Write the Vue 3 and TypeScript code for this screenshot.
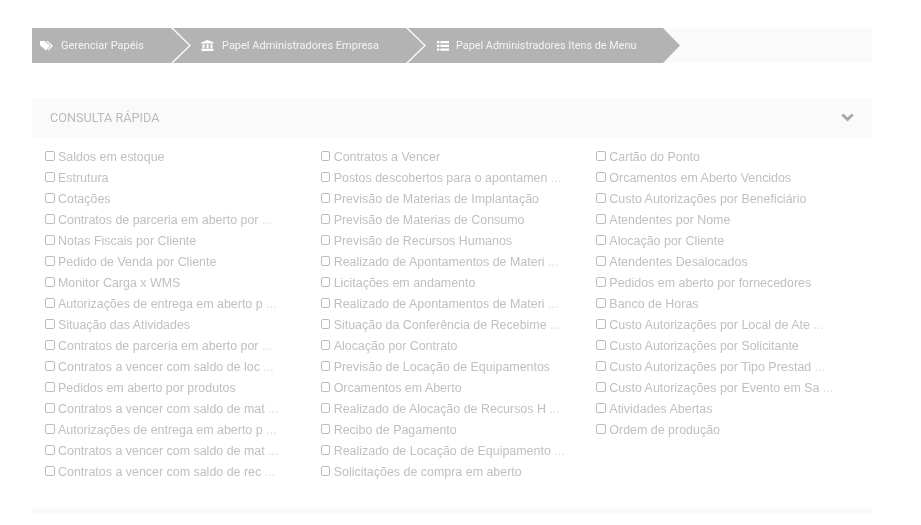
<script setup lang="ts">
const crumbs: { label: string; icon: string }[] = [
  { label: 'Gerenciar Papéis', icon: 'tags' },
  { label: 'Papel Administradores Empresa', icon: 'bank' },
  { label: 'Papel Administradores Itens de Menu', icon: 'list' },
]
const columns: string[][] = [
  [
    'Saldos em estoque', 'Estrutura', 'Cotações', 'Contratos de parceria em aberto por ...',
    'Notas Fiscais por Cliente', 'Pedido de Venda por Cliente', 'Monitor Carga x WMS',
    'Autorizações de entrega em aberto p ...', 'Situação das Atividades',
    'Contratos de parceria em aberto por ...', 'Contratos a vencer com saldo de loc ...',
    'Pedidos em aberto por produtos', 'Contratos a vencer com saldo de mat ...',
    'Autorizações de entrega em aberto p ...', 'Contratos a vencer com saldo de mat ...',
    'Contratos a vencer com saldo de rec ...',
  ],
  [
    'Contratos a Vencer', 'Postos descobertos para o apontamen ...', 'Previsão de Materias de Implantação',
    'Previsão de Materias de Consumo', 'Previsão de Recursos Humanos',
    'Realizado de Apontamentos de Materi ...', 'Licitações em andamento',
    'Realizado de Apontamentos de Materi ...', 'Situação da Conferência de Recebime ...',
    'Alocação por Contrato', 'Previsão de Locação de Equipamentos', 'Orcamentos em Aberto',
    'Realizado de Alocação de Recursos H ...', 'Recibo de Pagamento',
    'Realizado de Locação de Equipamento ...', 'Solicitações de compra em aberto',
  ],
  [
    'Cartão do Ponto', 'Orcamentos em Aberto Vencidos', 'Custo Autorizações por Beneficiário',
    'Atendentes por Nome', 'Alocação por Cliente', 'Atendentes Desalocados',
    'Pedidos em aberto por fornecedores', 'Banco de Horas', 'Custo Autorizações por Local de Ate ...',
    'Custo Autorizações por Solicitante', 'Custo Autorizações por Tipo Prestad ...',
    'Custo Autorizações por Evento em Sa ...', 'Atividades Abertas', 'Ordem de produção',
  ],
]
const body = (t: string): string => t.replace(/ \.\.\.$/, '')
const more = (t: string): boolean => t.endsWith(' ...')
</script>

<template>
  <div class="page">
    <nav class="crumbs">
      <div v-for="(c, i) in crumbs" :key="c.label" class="crumb" :class="'crumb-' + i">
        <svg v-if="c.icon === 'tags'" class="ic" viewBox="0 0 14 10" width="14" height="10">
          <path d="M0 0h4.5L10 4.8 6 9.6 0 4.2z" fill="#fff" />
          <path d="M6 0h1.6L13 4.8 8.6 9.6 7.6 8.9 11 4.8z" fill="#fff" />
        </svg>
        <svg v-else-if="c.icon === 'bank'" class="ic" viewBox="0 0 13 11" width="13" height="11">
          <path d="M6.5 0L13 2.6V3.6H0V2.6z" fill="#fff" />
          <path d="M1.5 4.2h2v4h-2zM5.5 4.2h2v4h-2zM9.5 4.2h2v4h-2z" fill="#fff" />
          <path d="M0.5 8.8h12V11h-12z" fill="#fff" />
        </svg>
        <svg v-else class="ic" viewBox="0 0 12 10" width="12" height="10">
          <path d="M0 0h2.4v2.2H0zM0 3.8h2.4V6H0zM0 7.6h2.4v2.2H0zM3.4 0H12v2.2H3.4zM3.4 3.8H12V6H3.4zM3.4 7.6H12v2.2H3.4z" fill="#fff" />
        </svg>
        <span>{{ c.label }}</span>
      </div>
    </nav>

    <section class="panel-head">
      <span class="title">CONSULTA RÁPIDA</span>
      <svg class="chev" viewBox="0 0 13 9" width="13" height="9">
        <path d="M1.3 1.5L6.5 6.6l5.2-5.1" fill="none" stroke="#a8a8a8" stroke-width="2.8" />
      </svg>
    </section>

    <div class="cols">
      <ul v-for="(col, i) in columns" :key="i" class="col">
        <li v-for="(t, j) in col" :key="j" class="row">
          <span class="box"></span>
          <span class="txt">{{ body(t) }}<span v-if="more(t)" class="more"> ...</span></span>
        </li>
      </ul>
    </div>

    <div class="foot"></div>
  </div>
</template>

<style scoped>
.page {
  width: 921px;
  height: 525px;
  overflow: hidden;
  box-sizing: border-box;
  padding: 28px 49px 0 32px;
  background: #fff;
  font-family: "Liberation Sans", Arial, sans-serif;
  filter: blur(0.3px);
}
.crumbs {
  display: flex;
  height: 35px;
  background: #fafafa;
}
.crumb {
  display: flex;
  align-items: center;
  height: 35px;
  box-sizing: border-box;
  background: #b3b3b3;
  color: #f4f4f4;
  font-family: Roboto, sans-serif;
  font-size: 11px;
  white-space: nowrap;
}
.crumb-0 {
  width: 157px;
  padding-left: 8px;
  gap: 7px;
  clip-path: polygon(0 0, 139px 0, 157px 17.5px, 139px 35px, 0 35px);
}
.crumb-1 {
  width: 251px;
  margin-left: -16px;
  padding-left: 28px;
  gap: 8px;
  clip-path: polygon(0 0, 233px 0, 251px 17.5px, 233px 35px, 0 35px, 18px 17.5px);
}
.crumb-2 {
  width: 272px;
  margin-left: -16px;
  padding-left: 29px;
  gap: 7px;
  clip-path: polygon(0 0, 255px 0, 272px 17.5px, 255px 35px, 0 35px, 18px 17.5px);
}
.crumb-2 span {
  font-size: 10.85px;
}
.ic {
  flex: none;
}
.panel-head {
  display: flex;
  align-items: center;
  justify-content: space-between;
  height: 39px;
  margin-top: 35px;
  padding: 0 18px;
  background: #fafafa;
}
.title {
  font-family: Roboto, sans-serif;
  font-size: 12.7px;
  color: #bcbcbc;
}
.chev {
  flex: none;
}
.cols {
  display: flex;
  padding: 9px 0 0 13px;
  height: 371px;
  box-sizing: border-box;
}
.col {
  width: 276px;
  margin: 0;
  padding: 0;
  list-style: none;
}
.row {
  display: flex;
  align-items: center;
  gap: 3.5px;
  height: 21px;
  font-size: 12.45px;
  color: #c0c0c0;
  white-space: nowrap;
}
.more {
  color: #dcdcdc;
}
.box {
  flex: none;
  width: 7.5px;
  height: 7.5px;
  margin-bottom: 1px;
  border: 1px solid #bcbcbc;
  border-radius: 2px;
}
.foot {
  height: 6px;
  background: #fafafa;
}
</style>
